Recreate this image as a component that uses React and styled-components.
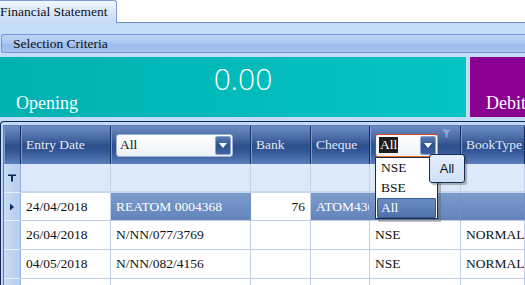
import React from "react";
import styled, { createGlobalStyle } from "styled-components";

const Global = createGlobalStyle`
  html, body { margin: 0; padding: 0; }
  body { width: 525px; height: 285px; overflow: hidden; background: #c6dbf6;
    font-family: "Liberation Serif", "DejaVu Serif", serif; }
`;

const Page = styled.div`
  width: 525px; height: 285px; display: flex; flex-direction: column; overflow: hidden;
`;

const TabStrip = styled.div`
  height: 23px; background: #fff; display: flex; align-items: flex-end;
  border-bottom: 1px solid #6d8fd0; box-sizing: border-box;
`;

const Tab = styled.div`
  width: 117px; height: 23px; box-sizing: border-box; margin-bottom: -1px;
  border: 1px solid #7d9bd6; border-left: none; border-bottom: none; border-top-right-radius: 3px;
  background: linear-gradient(#f3f8fe, #d4e5fa 55%, #c6dbf6);
  font-size: 13.5px; color: #111; padding: 3px 0 0 0; white-space: nowrap;
`;

const Spacer = styled.div` height: ${p => p.h}px; background: #c6dbf6; flex: none; `;

const CriteriaBar = styled.div`
  height: 20px; box-sizing: border-box; margin-left: 1px;
  border-top: 1px solid #7795d6; border-bottom: 1px solid #7795d6; border-left: 1px solid #7795d6;
  border-top-left-radius: 3px; border-bottom-left-radius: 3px;
  background: linear-gradient(#bcd5f7, #acc8f3 45%, #9dbbeb 55%, #a6c3ef);
  font-size: 13.5px; color: #111; padding: 1px 0 0 11px; white-space: nowrap;
`;

const Panels = styled.div`
  height: 60px; display: flex; gap: 4px; flex: none;
`;

const Panel = styled.div`
  position: relative; flex: ${p => (p.fixed ? "none" : "1")}; width: ${p => p.w}px;
  background: ${p => p.bg}; color: #fff; overflow: hidden;
`;

const Amount = styled.div`
  position: absolute; left: 20px; right: 0; top: 2px; text-align: center;
  font-family: "Open Sans", "Lato", sans-serif; font-weight: 300; font-size: 30px; line-height: 40px;
`;

const PanelLabel = styled.div`
  position: absolute; left: 16px; top: 36px; font-size: 18px; white-space: nowrap;
`;

const GridWrap = styled.div`
  position: relative; margin-top: 4px; flex: 1;
  border: 1px solid #0f2a5a; border-right: none; border-bottom: none;
  border-top-left-radius: 4px; background: #c5d8f2; padding: 3px 0 0 2px;
`;

const Grid = styled.div`
  display: grid; grid-template-columns: 17px 90px 140px 60px 59px 91px 1fr;
  grid-template-rows: 38px 29px 28px 29px 29px 20px;
  background: #fff; border-left: 1px solid #5a7bb4; border-top: 1px solid #5a7bb4;
`;

const HeadCell = styled.div`
  position: relative; box-sizing: border-box;
  background: linear-gradient(#6b8cc2 0%, #4a6ca7 30%, #2c4f8c 52%, #36599a 70%, #5c80bb 100%);
  border-right: 1px solid #142f62; box-shadow: inset 1px 0 0 #7d9ccf;
  color: #e3eaf6; font-size: 13.5px; display: flex; align-items: center; padding-left: 5px; white-space: nowrap;
`;

const FilterCell = styled.div`
  box-sizing: border-box; background: #dde9f8; border-right: 1px solid #c3d3ea;
  border-bottom: 2px solid #c5d6ee;
`;

const Indicator = styled.div`
  box-sizing: border-box; background: linear-gradient(90deg, #c9dbf4, #b7cdef);
  border-right: 1px solid #93afdc; border-bottom: 1px solid #e9f0fb;
  display: flex; align-items: center; justify-content: center;
`;

const Cell = styled.div`
  box-sizing: border-box; font-size: 13.5px; white-space: nowrap; overflow: hidden;
  display: flex; align-items: center; padding: 0 5px;
  justify-content: ${p => (p.right ? "flex-end" : "flex-start")};
  color: ${p => (p.sel ? "#fff" : "#111")};
  background: ${p => (p.sel ? "linear-gradient(#7d9ccd, #6384bb)" : "#fff")};
  border-right: 1px solid ${p => (p.sel ? "#6f8fc3" : "#c3cfe2")};
  border-bottom: 1px solid #c3cfe2;
`;

const Combo = styled.div`
  position: relative; display: flex; align-items: center; box-sizing: border-box;
  width: ${p => p.w}px; height: 23px; border-radius: 3px;
  background: linear-gradient(#ffffff, #eef1f7);
  border: 1px solid ${p => (p.focus ? "#f06a1a" : "#9fb2d3")};
  ${p => p.focus && "border-left-color:#e0202a; border-top-color:#e8402a; border-right-color:#f8a020;"}
  padding: 0 1px 0 3px; color: #111; font-size: 13.5px;
`;

const ComboText = styled.span`
  flex: 1; ${p => p.hl && "flex: none; background: #1d1d1d; color: #fff; padding: 0 1px; margin-right: auto;"}
`;

const ComboBtn = styled.div`
  width: 16px; height: 19px; margin-left: auto; border-radius: 2px; box-sizing: border-box;
  border: 1px solid #8aa4cf;
  background: linear-gradient(#5b7cb5, #2f5391 50%, #3f63a0);
  display: flex; align-items: center; justify-content: center;
`;

const Tri = styled.div`
  width: 0; height: 0; border-left: 4px solid transparent; border-right: 4px solid transparent;
  border-top: 5px solid #fff; margin-top: 1px;
`;

const FunnelHint = styled.svg`
  position: absolute; right: 9px; top: 3px;
`;

const DropList = styled.div`
  position: absolute; left: 5px; top: 31px; width: 63px; height: 62px; box-sizing: border-box;
  background: #fff; border: 1px solid #1a2c52; z-index: 5;
  box-shadow: 3px 3px 0 rgba(90, 90, 90, 0.35);
  display: flex; flex-direction: column; padding: 0 1px 1px 1px;
`;

const DropItem = styled.div`
  height: 20px; flex: none; display: flex; align-items: center; padding-left: 4px; font-size: 13.5px;
  color: ${p => (p.sel ? "#fff" : "#111")};
  background: ${p => (p.sel ? "linear-gradient(#6d8ec4, #4e70ab)" : "transparent")};
  ${p => p.sel && "border-radius: 2px; box-shadow: inset 0 0 0 1px #3a5790;"}
`;

const Tooltip = styled.div`
  position: absolute; left: 59px; top: 28px; width: 36px; height: 29px; box-sizing: border-box;
  border: 1px solid #1a2c52; border-radius: 3px; background: linear-gradient(#e4eefd, #cfe0fa);
  box-shadow: 2px 2px 1px rgba(60, 60, 60, 0.35); z-index: 6;
  font-family: "Liberation Sans", Arial, sans-serif; font-size: 13px; color: #111;
  display: flex; align-items: center; justify-content: center;
`;

const Funnel = () => (
  <svg width="8" height="8" viewBox="0 0 8 8">
    <path d="M0 0.5h8v1.5H5v5.5H3V2H0z" fill="#0f2a5a" />
  </svg>
);

const Arrow = () => (
  <svg width="6" height="8" viewBox="0 0 6 8">
    <path d="M1 0.5L5 4L1 7.5z" fill="#0f2a5a" />
  </svg>
);

const rows = [
  ["26/04/2018", "N/NN/077/3769", "", "", "NSE", "NORMAL"],
  ["04/05/2018", "N/NN/082/4156", "", "", "NSE", "NORMAL"],
  ["", "", "", "", "", ""],
];

export default function App() {
  return (
    <Page>
      <Global />
      <TabStrip>
        <Tab>Financial Statement</Tab>
      </TabStrip>
      <Spacer h={11} />
      <CriteriaBar>Selection Criteria</CriteriaBar>
      <Spacer h={4} />
      <Panels>
        <Panel w={466} fixed bg="linear-gradient(90deg, #00b1b1, #06c4c4)">
          <Amount>0.00</Amount>
          <PanelLabel>Opening</PanelLabel>
        </Panel>
        <Panel bg="#8a0090">
          <PanelLabel>Debit</PanelLabel>
        </Panel>
      </Panels>
      <GridWrap>
        <Grid>
          <HeadCell />
          <HeadCell>Entry Date</HeadCell>
          <HeadCell>
            <Combo w={117}>
              <ComboText>All</ComboText>
              <ComboBtn><Tri /></ComboBtn>
            </Combo>
          </HeadCell>
          <HeadCell>Bank</HeadCell>
          <HeadCell>Cheque</HeadCell>
          <HeadCell>
            <Combo w={63} focus>
              <ComboText hl>All</ComboText>
              <ComboBtn><Tri /></ComboBtn>
            </Combo>
            <FunnelHint width="9" height="9" viewBox="0 0 9 9">
              <path d="M0 0.5h9L5.5 4.5V8.5H3.5V4.5z" fill="#8ea7cf" />
            </FunnelHint>
            <DropList>
              <DropItem>NSE</DropItem>
              <DropItem>BSE</DropItem>
              <DropItem sel>All</DropItem>
            </DropList>
            <Tooltip>All</Tooltip>
          </HeadCell>
          <HeadCell>BookType</HeadCell>

          <Indicator><Funnel /></Indicator>
          <FilterCell />
          <FilterCell />
          <FilterCell />
          <FilterCell />
          <FilterCell />
          <FilterCell />

          <Indicator><Arrow /></Indicator>
          <Cell>24/04/2018</Cell>
          <Cell sel>REATOM 0004368</Cell>
          <Cell right>76</Cell>
          <Cell sel>ATOM436</Cell>
          <Cell sel />
          <Cell sel />

          {rows.map((r, i) => (
            <React.Fragment key={i}>
              <Indicator />
              {r.map((c, j) => (
                <Cell key={j}>{c}</Cell>
              ))}
            </React.Fragment>
          ))}
        </Grid>
      </GridWrap>
    </Page>
  );
}
